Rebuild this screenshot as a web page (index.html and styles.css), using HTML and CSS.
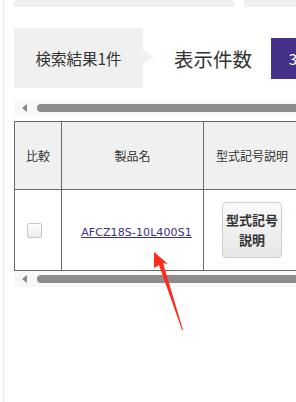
FILE: index.html
```html
<!DOCTYPE html>
<html lang="ja">
<head>
<meta charset="utf-8">
<link rel="stylesheet" href="styles.css">
</head>
<body>
<div class="page">
  <div class="top-row">
    <div class="top-box top-box-a"></div>
    <div class="top-box top-box-b"></div>
  </div>
  <div class="result-row">
    <div class="count">検索結果1件</div>
    <div class="per-page-label">表示件数</div>
    <div class="per-page-value">3</div>
  </div>
  <div class="scrollbar"><span class="sb-arrow"></span><span class="sb-thumb"></span></div>
  <table class="results">
    <colgroup>
      <col class="c1"><col class="c2"><col class="c3"><col class="c4">
    </colgroup>
    <thead>
      <tr><th>比較</th><th>製品名</th><th>型式記号説明</th><th></th></tr>
    </thead>
    <tbody>
      <tr>
        <td><input type="checkbox" class="cmp"></td>
        <td><a href="#" class="prod">AFCZ18S-10L400S1</a></td>
        <td><button class="spec-btn">型式記号<br>説明</button></td>
        <td></td>
      </tr>
    </tbody>
  </table>
  <div class="scrollbar scrollbar-bottom"><span class="sb-arrow"></span><span class="sb-thumb"></span></div>
</div>
<svg class="red-arrow" width="40" height="90" viewBox="0 0 40 90">
  <polygon points="3,1 17,13 12,12 32,79 31,79 8,14 3,17" fill="#ff2a1a"/>
</svg>
</body>
</html>
```
FILE: styles.css
```css
html, body {
  margin: 0;
  padding: 0;
  background: #fff;
}
body {
  width: 296px;
  height: 402px;
  overflow: hidden;
  position: relative;
  font-family: "Noto Sans CJK JP", "Noto Sans", sans-serif;
  color: #333;
}
.page {
  margin-left: 3px;
  border-left: 1px solid #e8e8e8;
  padding-left: 10px;
  height: 402px;
  width: 600px;
}
.top-row {
  display: flex;
  gap: 10px;
  height: 7px;
}
.top-box {
  background: #f0f0f0;
}
.top-box-a { width: 220px; }
.top-box-b { width: 200px; }

.result-row {
  margin-top: 21px;
  display: flex;
  align-items: center;
  height: 60px;
}
.count {
  position: relative;
  width: 129px;
  height: 60px;
  background: #f0f0f0;
  font-size: 15.5px;
  display: flex;
  align-items: center;
  justify-content: center;
}
.count::after {
  content: "";
  position: absolute;
  left: 129px;
  top: 22px;
  border-left: 11px solid #f0f0f0;
  border-top: 7px solid transparent;
  border-bottom: 7px solid transparent;
}
.per-page-label {
  margin-left: 31px;
  font-size: 19.5px;
  color: #333;
}
.per-page-value {
  margin-left: 19px;
  width: 44px;
  height: 41px;
  background: #45308a;
  color: #fff;
  font-size: 15px;
  display: flex;
  align-items: center;
  justify-content: center;
  margin-top: 1px;
}

.scrollbar {
  margin-top: 13px;
  height: 14px;
  width: 600px;
  background: #f8f8f8;
  display: flex;
  align-items: center;
}
.sb-arrow {
  margin-left: 8px;
  width: 0;
  height: 0;
  border-right: 5px solid #888;
  border-top: 4px solid transparent;
  border-bottom: 4px solid transparent;
}
.sb-thumb {
  margin-left: 10px;
  height: 8px;
  flex: 1;
  background: #8c8c8c;
  border-radius: 4px;
}
.scrollbar-bottom {
  margin-top: 0;
  height: 16px;
}

.results {
  margin-top: 6px;
  border-collapse: collapse;
  table-layout: fixed;
  width: 400px;
}
.results col.c1 { width: 47px; }
.results col.c2 { width: 142px; }
.results col.c3 { width: 97px; }
.results col.c4 { width: 114px; }
.results th, .results td {
  border: 1px solid #6a6a6a;
  text-align: center;
  vertical-align: middle;
  padding: 0;
}
.results th {
  background: #f0f0f0;
  height: 67px;
  font-size: 12px;
  font-weight: normal;
  color: #333;
}
.results td {
  height: 80px;
  font-size: 12px;
}
.cmp {
  appearance: none;
  -webkit-appearance: none;
  margin: 0;
  width: 15px;
  height: 15px;
  border: 1px solid #c8c8c8;
  border-radius: 2px;
  background: linear-gradient(#fff, #ececec);
  vertical-align: middle;
  position: relative;
  top: -1px;
  left: -4px;
}
.prod {
  display: inline-block;
  margin-left: 8px;
  color: #3a2f7f;
  text-decoration: underline;
  font-family: "DejaVu Sans", sans-serif;
  font-size: 11px;
  letter-spacing: 0.1px;
}
.spec-btn {
  width: 60px;
  height: 56px;
  border: 1px solid #cfcfcf;
  border-radius: 4px;
  background: linear-gradient(#fafafa, #e6e6e6);
  font-family: "Noto Sans CJK JP", sans-serif;
  font-size: 13px;
  font-weight: bold;
  line-height: 20px;
  color: #333;
  padding: 0;
  margin: 0;
}
.red-arrow {
  position: absolute;
  left: 151px;
  top: 251px;
}
```
